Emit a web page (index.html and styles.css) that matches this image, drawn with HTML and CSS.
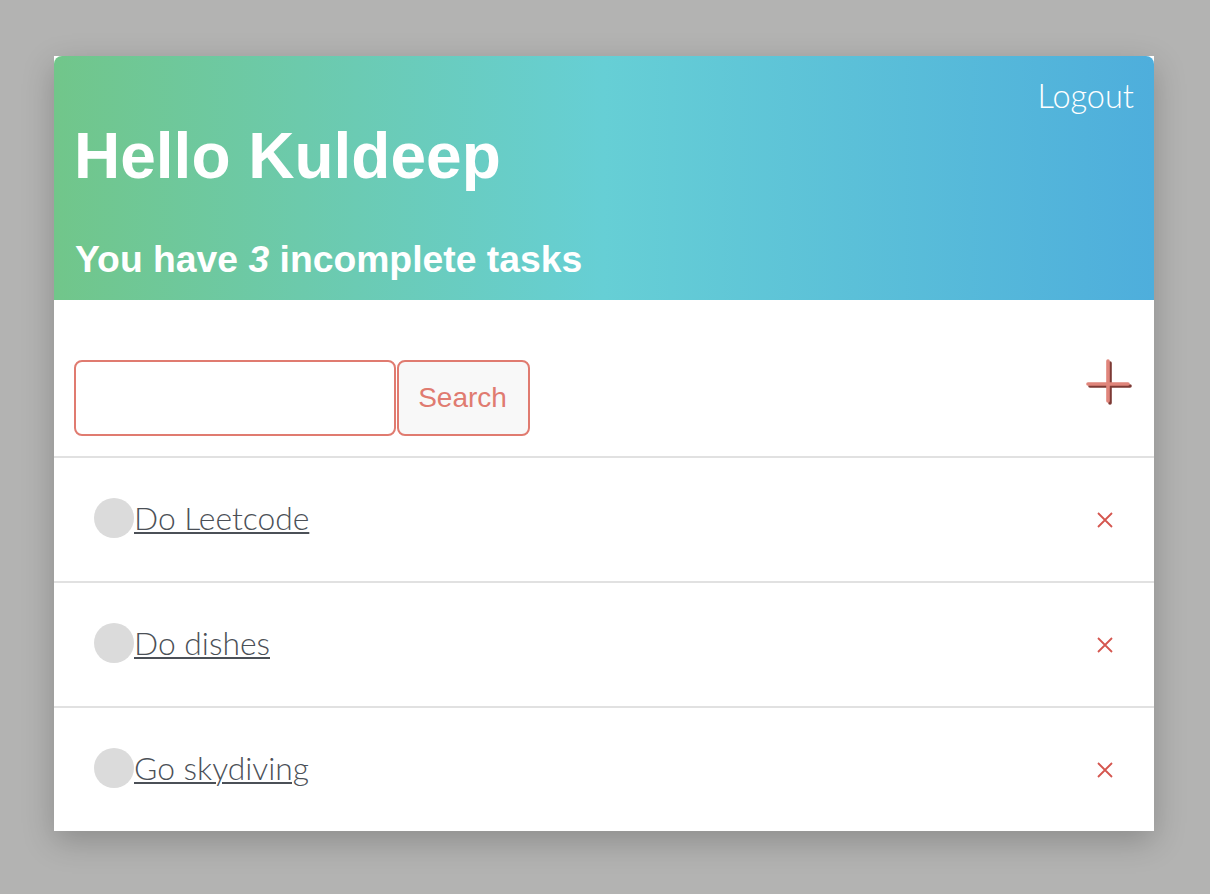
FILE: index.html
```html
<!DOCTYPE html>
<html lang="en">
<head>
<meta charset="utf-8">
<title>Todo</title>
<link rel="stylesheet" href="styles.css">
</head>
<body>
<div class="card">
  <header class="header">
    <div class="topbar"><a class="logout" href="#">Logout</a></div>
    <h1 class="title">Hello Kuldeep</h1>
    <h2 class="subtitle">You have <em>3</em> incomplete tasks</h2>
  </header>
  <div class="toolbar">
    <form class="search">
      <input class="search-input" type="text">
      <button class="search-btn" type="button">Search</button>
    </form>
    <button class="add-btn" type="button" aria-label="Add task">
      <svg width="46" height="46" viewBox="0 0 46 46">
        <g stroke="#7d3a35" stroke-width="3.6" stroke-linecap="round">
          <line x1="24" y1="4" x2="24" y2="44"/>
          <line x1="4" y1="27" x2="44" y2="27"/>
        </g>
        <g stroke="#e0857b" stroke-width="3.6" stroke-linecap="round">
          <line x1="22" y1="2" x2="22" y2="42"/>
          <line x1="2" y1="25" x2="42" y2="25"/>
        </g>
      </svg>
    </button>
  </div>
  <ul class="tasks">
    <li class="task">
      <span class="check"></span>
      <a class="task-name" href="#">Do Leetcode</a>
      <button class="remove" type="button" aria-label="Delete"><svg width="16" height="16" viewBox="0 0 16 16"><path d="M1 1L15 15M15 1L1 15" stroke="#d5564f" stroke-width="1.8"/></svg></button>
    </li>
    <li class="task">
      <span class="check"></span>
      <a class="task-name" href="#">Do dishes</a>
      <button class="remove" type="button" aria-label="Delete"><svg width="16" height="16" viewBox="0 0 16 16"><path d="M1 1L15 15M15 1L1 15" stroke="#d5564f" stroke-width="1.8"/></svg></button>
    </li>
    <li class="task">
      <span class="check"></span>
      <a class="task-name" href="#">Go skydiving</a>
      <button class="remove" type="button" aria-label="Delete"><svg width="16" height="16" viewBox="0 0 16 16"><path d="M1 1L15 15M15 1L1 15" stroke="#d5564f" stroke-width="1.8"/></svg></button>
    </li>
  </ul>
</div>
</body>
</html>
```
FILE: styles.css
```css
html, body {
  margin: 0;
  padding: 0;
}
body {
  background: #b3b3b2;
  min-height: 894px;
  padding-top: 56px;
  box-sizing: border-box;
}
.card {
  width: 1100px;
  margin-left: 54px;
  background: #ffffff;
  box-shadow: 0 10px 30px rgba(0, 0, 0, 0.22);
}
.header {
  border-radius: 8px 8px 0 0;
  background: linear-gradient(to right, #71c68a 0%, #66cfd5 50%, #4eaedc 100%);
  padding: 20px 20px 22px 21px;
  color: #ffffff;
  height: 244px;
  box-sizing: border-box;
}
.topbar {
  display: flex;
  justify-content: flex-end;
}
.logout {
  font-family: Lato, "Noto Sans", sans-serif;
  font-weight: 300;
  font-size: 32.5px;
  line-height: 40px;
  color: #ffffff;
  text-decoration: none;
}
.title {
  margin: 8px 0 0 -1px;
  font-family: "Liberation Sans", Arial, sans-serif;
  font-weight: 700;
  font-size: 64px;
  line-height: 64px;
}
.subtitle {
  margin: 51px 0 0 0;
  font-family: "Liberation Sans", Arial, sans-serif;
  font-weight: 700;
  font-size: 37.3px;
  line-height: 40px;
}
.subtitle em {
  font-style: italic;
}
.toolbar {
  display: flex;
  justify-content: space-between;
  align-items: flex-start;
  padding: 60px 22px 20px 20px;
  height: 156px;
  box-sizing: border-box;
}
.search {
  display: flex;
  gap: 1px;
  margin: 0;
}
.search-input {
  width: 322px;
  height: 76px;
  box-sizing: border-box;
  border: 2px solid #e07b70;
  border-radius: 8px;
  background: #ffffff;
  padding: 0 12px;
  font-size: 24px;
  outline: none;
}
.search-btn {
  width: 133px;
  height: 76px;
  box-sizing: border-box;
  border: 2px solid #e07b70;
  border-radius: 8px;
  background: #f8f8f8;
  color: #e07b70;
  font-family: "Liberation Sans", Arial, sans-serif;
  font-size: 28px;
  padding: 0 2px 0 0;
}
.add-btn {
  border: 0;
  background: none;
  padding: 0;
  margin-top: -1px;
  width: 46px;
  height: 46px;
  display: block;
}
.add-btn svg {
  display: block;
}
.tasks {
  list-style: none;
  margin: 0;
  padding: 0;
}
.task {
  display: flex;
  align-items: center;
  height: 125px;
  box-sizing: border-box;
  border-top: 2px solid #e1e1e1;
  padding: 0 41px 4px 40px;
}
.check {
  width: 40px;
  height: 40px;
  border-radius: 50%;
  background: #dbdbdb;
  flex: none;
}
.task-name {
  font-family: Lato, "Noto Sans", sans-serif;
  font-weight: 300;
  font-size: 31.8px;
  color: #4b5057;
  text-decoration: underline;
  text-decoration-thickness: 2px;
  text-underline-offset: 2px;
}
.remove {
  margin-left: auto;
  margin-top: 4px;
  border: 0;
  background: none;
  padding: 0;
  width: 16px;
  height: 16px;
}
.remove svg {
  display: block;
}
```
